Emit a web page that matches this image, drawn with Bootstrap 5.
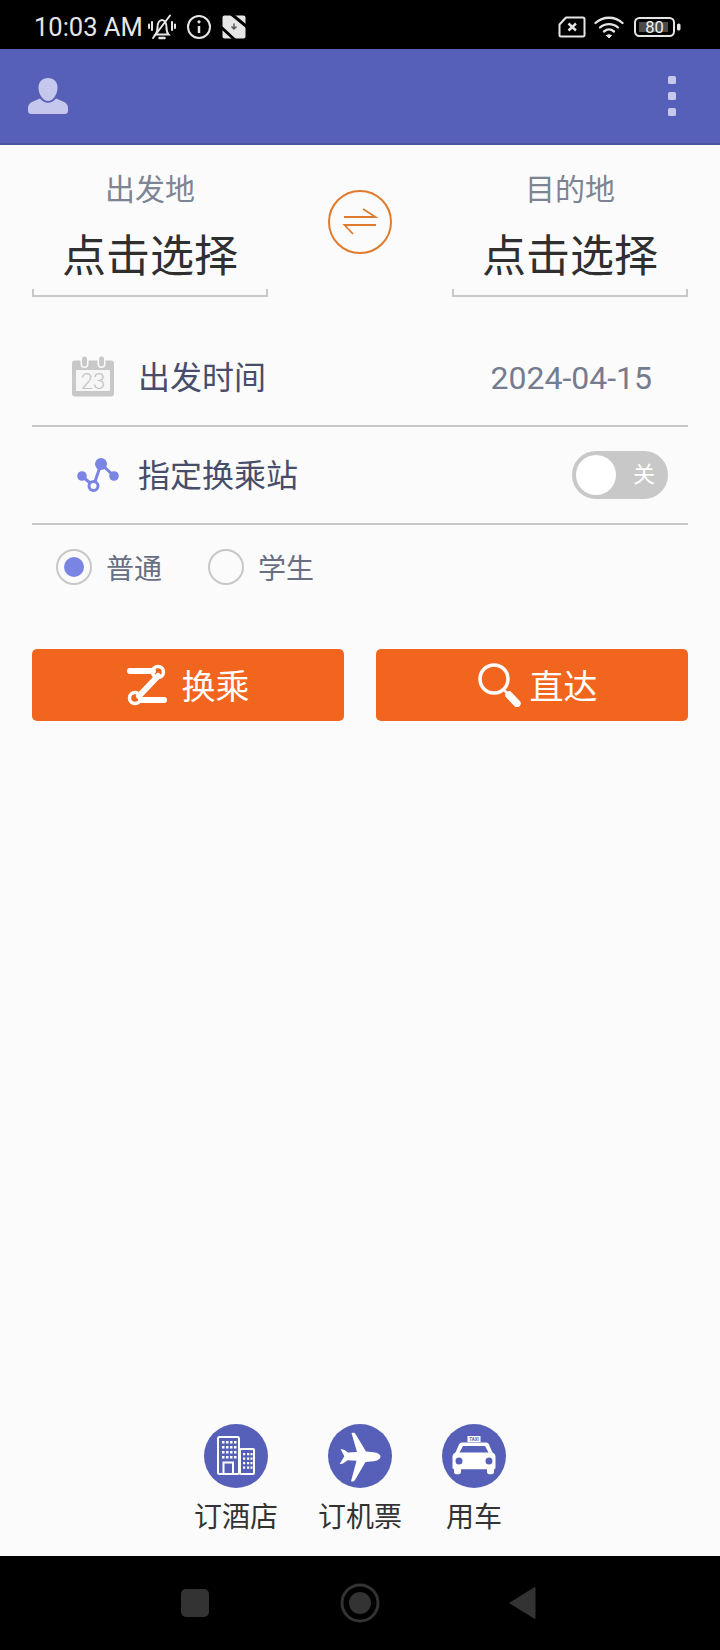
<!DOCTYPE html>
<html lang="zh">
<head>
<meta charset="utf-8">
<title>换乘</title>
<link href="https://cdn.jsdelivr.net/npm/bootstrap@5.3.0/dist/css/bootstrap.min.css" rel="stylesheet">
<style>
html,body{height:1650px;overflow:hidden;margin:0}
body{font-family:"Roboto","Noto Sans CJK SC",sans-serif;background:#fbfbfb}
svg{display:block;flex:none}
.phone{height:1650px}
.sbar{height:49px;background:#000;color:#e6e6e6;padding:5px 39px 0 34px}
.sbar-time{font-size:25.5px;line-height:30px;width:114px;white-space:nowrap}
.sb-info{margin-left:10px}
.sb-dl{margin-left:10px}
.sb-batt{margin-left:10px}
.abar{height:96px;background:#5760b8;border-bottom:2px solid #4c549f;padding:0 44px 0 28px}
.dots{gap:8px}
.dots i{display:block;width:8px;height:8px;border-radius:1.5px;background:#c5c8ec}
.route{padding:26px 32px 0 32px}
.place{width:236px;text-align:center}
.place-l{font-size:30px;line-height:38px;color:#7d8494}
.place-v{font-size:44px;line-height:60px;margin-top:18px;color:#2f2f2f}
.brk{height:8px;margin-top:2px;border:2px solid #c8c8c8;border-top:0}
.swap{width:64px;height:64px;margin-top:19px}
.frow{margin:0 32px;height:98px;border-bottom:2px solid #c8c8c8;padding-left:40px;font-size:32px;color:#474d6b}
.frow-a{margin-top:32px;padding-right:36px;padding-top:2px}
.frow-b{padding-right:20px;padding-top:2px}
.frow-date{color:#767c8f;font-size:32px}
.tgl{width:96px;height:48px;border-radius:24px;background:#c8c8c8;padding:4px;color:#fff;font-size:22px;line-height:40px;margin-bottom:2px}
.tgl-k{width:40px;height:40px;border-radius:50%;background:#fff}
.tgl-t{margin-left:17px}
.radios{margin-top:24px;padding-left:56px;height:36px;font-size:28px;color:#696e81}
.rd{width:36px;height:36px;border-radius:50%;border:2.5px solid #c8c8c8;margin-right:14px}
.rd-on::after{content:"";width:20px;height:20px;border-radius:50%;background:#7a84e2}
.rd-lab{padding-top:5px}
.rd-txt{margin-right:46px}
.acts{margin:64px 32px 0 32px;gap:32px}
.go{flex:1 1 0;height:72px;background:#f2651f;border:0;border-radius:5px;color:#fff;font-size:34px;line-height:1;padding:0}
.go:hover,.go:active{background:#f2651f;color:#fff}
.go span{padding-top:3px}
.go-a{gap:15px}
.go-b{gap:9px}
.go-b svg{margin-left:10px}
.foot{padding:0 0 20px 194px;gap:40px}
.fi{width:84px}
.fi-c{width:64px}
.fi-o{width:64px;height:64px}
.fi-t{font-size:28px;line-height:36px;margin-top:12px;color:#333;white-space:nowrap}
.nbar{height:94px;background:#000}
.nb-a{width:28px;height:28px;border-radius:5px;background:#333}
.nb-w{padding:0 184px 0 181px;height:94px}
.nb-t{margin-left:-2px}
</style>
</head>
<body>
<div class="phone d-flex flex-column">
  <div class="sbar d-flex align-items-center">
    <span class="sbar-time">10:03 AM</span>
    <svg width="28" height="26" viewBox="0 0 28 26" fill="none" stroke="#e6e6e6" stroke-width="2" stroke-linecap="round">
      <path d="M7.500 20.500h13c-1.500-1.500-2-3.500-2-7 0-4.500-2-7.500-4.500-7.500s-4.500 3-4.500 7.500c0 3.500-.5 5.500-2 7z"/>
      <path d="M11.500 24h5" stroke-width="2.500"/>
      <path d="M22 1.500 5 24" stroke-width="2"/>
      <path d="M4 8v8M1 10.500v3.500M24 8v8M27 10.500v3.500"/>
    </svg>
    <svg class="sb-info" width="26" height="26" viewBox="0 0 26 26" fill="none" stroke="#e6e6e6" stroke-width="2">
      <circle cx="13" cy="13" r="11"/><path d="M13 12v7" stroke-width="2.500"/><circle cx="13" cy="7.800" r="1.600" fill="#e6e6e6" stroke="none"/>
    </svg>
    <svg class="sb-dl" width="24" height="24" viewBox="0 0 24 24">
      <rect x="0.500" y="0.500" width="23" height="23" rx="2" fill="#e6e6e6"/>
      <path d="M8 0 24 13v-4L13 0zM0 11 14 24h-4L0 15z" fill="#000"/>
      <path d="M12 8.500v5M9.500 11.500 12 14l2.500-2.500" fill="none" stroke="#555" stroke-width="1.400"/>
    </svg>
    <div class="ms-auto d-flex align-items-center">
      <svg width="28" height="22" viewBox="0 0 28 22" fill="none" stroke="#e6e6e6" stroke-width="2">
        <path d="M8 1.500h17a1.500 1.500 0 0 1 1.500 1.500v16a1.500 1.500 0 0 1-1.500 1.500H3A1.500 1.500 0 0 1 1.500 19V8.500z" stroke-linejoin="round"/>
        <path d="M10.500 7.500l7.500 7M18 7.500l-7.500 7" stroke-width="2.400"/>
      </svg>
      <svg class="ms-2" width="30" height="24" viewBox="0 0 30 24" fill="none" stroke="#e6e6e6" stroke-width="2.300" stroke-linecap="round">
        <path d="M1.500 8C9 1 21 1 28.500 8"/><path d="M6 12.500c5-4.500 13-4.500 18 0"/><path d="M10 16.500c3-2.500 7-2.500 10 0"/>
        <path d="M12.500 20.500 15 23l2.500-2.500C16 19.500 14 19.500 12.500 20.500z" fill="#e6e6e6" stroke-width="1"/>
      </svg>
      <svg class="sb-batt" width="47" height="20" viewBox="0 0 47 20">
        <rect x="1" y="1" width="39" height="18" rx="4.500" fill="none" stroke="#e6e6e6" stroke-width="2"/>
        <rect x="5" y="5" width="29" height="10" fill="#4a4a4a"/>
        <rect x="43" y="6.500" width="3.500" height="7" rx="1.500" fill="#e6e6e6"/>
        <text x="20.500" y="16" text-anchor="middle" font-family="Roboto" font-size="16.500" fill="#f0f0f0">80</text>
      </svg>
    </div>
  </div>

  <div class="abar d-flex align-items-center justify-content-between">
    <svg width="40" height="36" viewBox="0 0 40 36" fill="#c5c8ec">
      <path d="M20 0c5.800 0 9.500 4 9.500 9.500 0 6-4 13.500-9.500 13.500S10.500 15.500 10.500 9.500C10.500 4 14.200 0 20 0z"/>
      <path d="M12 20.500c2 2.500 4.800 4.200 8 4.200s6-1.700 8-4.200l7 3c3 1.200 5 3 5 6.500v2.500a3.500 3.500 0 0 1-3.500 3.500h-33A3.500 3.500 0 0 1 0 32.500V30c0-3.500 2-5.300 5-6.500z"/>
    </svg>
    <div class="dots d-flex flex-column"><i></i><i></i><i></i></div>
  </div>

  <main class="flex-grow-1 d-flex flex-column">
    <div class="route d-flex justify-content-between align-items-start">
      <div class="place">
        <div class="place-l">出发地</div>
        <div class="place-v">点击选择</div>
        <div class="brk"></div>
      </div>
      <svg class="swap" viewBox="0 0 64 64" fill="none" stroke="#e07b2d">
        <circle cx="32" cy="32" r="31" stroke-width="2"/>
        <path d="M16 27h31.500L35 19M48 35H16.500L25 44" stroke-width="1.800"/>
      </svg>
      <div class="place">
        <div class="place-l">目的地</div>
        <div class="place-v">点击选择</div>
        <div class="brk"></div>
      </div>
    </div>

    <div class="frow frow-a d-flex align-items-center">
      <svg width="66" height="44" viewBox="0 0 66 44">
        <rect y="4.500" width="42" height="36" rx="3" fill="#c8c8c8"/>
        <rect x="4" y="14" width="34" height="21" fill="#f6f6f6"/>
        <rect x="8.500" y="0" width="8" height="12" rx="4" fill="#fbfbfb"/>
        <rect x="25.500" y="0" width="8" height="12" rx="4" fill="#fbfbfb"/>
        <rect x="10" y="0.500" width="5" height="10" rx="2.500" fill="#c8c8c8"/>
        <rect x="27" y="0.500" width="5" height="10" rx="2.500" fill="#c8c8c8"/>
        <text x="21" y="32.500" text-anchor="middle" font-family="Roboto" font-weight="300" font-size="22" fill="#c4c4c4">23</text>
      </svg>
      <span>出发时间</span>
      <span class="frow-date ms-auto">2024-04-15</span>
    </div>

    <div class="frow frow-b d-flex align-items-center">
      <svg width="66" height="44" viewBox="0 0 66 44">
        <path d="M10 22 21.500 32 29 10 42 22" fill="none" stroke="#7a84e2" stroke-width="3"/>
        <circle cx="29" cy="10" r="6" fill="#7a84e2"/>
        <circle cx="42" cy="22" r="4.800" fill="#7a84e2"/>
        <circle cx="10" cy="22" r="4.800" fill="#7a84e2"/>
        <circle cx="21.500" cy="32" r="4.500" fill="#fbfbfb" stroke="#7a84e2" stroke-width="3"/>
      </svg>
      <span>指定换乘站</span>
      <div class="tgl d-flex ms-auto">
        <span class="tgl-k"></span>
        <span class="tgl-t">关</span>
      </div>
    </div>

    <div class="radios d-flex align-items-center">
      <span class="rd rd-on d-flex align-items-center justify-content-center"></span>
      <span class="rd-lab rd-txt">普通</span>
      <span class="rd"></span>
      <span class="rd-lab">学生</span>
    </div>

    <div class="acts d-flex">
      <button type="button" class="btn go go-a d-flex align-items-center justify-content-center">
        <svg width="40" height="42" viewBox="0 0 40 42" fill="none" stroke="#fff" stroke-linecap="round">
          <path d="M3 7h23M31 12 12 32M14 36h23" stroke-width="6"/>
          <circle cx="31" cy="8" r="5.500" stroke-width="3.500"/>
          <circle cx="8" cy="34" r="5.500" stroke-width="3.500"/>
        </svg>
        <span>换乘</span>
      </button>
      <button type="button" class="btn go go-b d-flex align-items-center justify-content-center">
        <svg width="44" height="44" viewBox="0 0 44 44" fill="none" stroke="#fff" stroke-linecap="round">
          <circle cx="17" cy="16" r="14" stroke-width="3.500"/>
          <path d="M27 27 29 29" stroke-width="2.500"/>
          <path d="M32 32 40 40.500" stroke-width="7.500"/>
        </svg>
        <span>直达</span>
      </button>
    </div>

    <div class="foot d-flex mt-auto">
      <div class="fi d-flex flex-column align-items-center">
        <svg class="fi-o" viewBox="0 0 64 64">
          <circle cx="32" cy="32" r="32" fill="#5760b8"/>
          <g fill="none" stroke="#fff" stroke-width="2">
            <rect x="14" y="13" width="21" height="37" rx="1.500"/>
            <rect x="36" y="25" width="14" height="25" rx="1"/>
            <path d="M19.500 50V38.500h9.500V50"/>
          </g>
          <g fill="#fff">
            <path d="M18 17h2.500v2.500H18zM22 17h2.500v2.500H22zM26 17h2.500v2.500H26zM30 17h2.500v2.500H30zM18 22h2.500v2.500H18zM22 22h2.500v2.500H22zM26 22h2.500v2.500H26zM30 22h2.500v2.500H30zM18 27h2.500v2.500H18zM22 27h2.500v2.500H22zM26 27h2.500v2.500H26zM30 27h2.500v2.500H30zM18 32h2.500v2.500H18zM22 32h2.500v2.500H22zM26 32h2.500v2.500H26zM30 32h2.500v2.500H30z"/>
            <path d="M39 29h2.200v2.200H39zM43 29h2.200v2.200H43zM46.500 29h2v2.200h-2zM39 33.500h2.200v2.200H39zM43 33.500h2.200v2.200H43zM46.500 33.500h2v2.200h-2zM39 38h2.200v2.200H39zM43 38h2.200v2.200H43zM46.500 38h2v2.200h-2zM39 42.500h2.200v2.200H39zM43 42.500h2.200v2.200H43zM46.500 42.500h2v2.200h-2z"/>
          </g>
        </svg>
        <div class="fi-t">订酒店</div>
      </div>
      <div class="fi d-flex flex-column align-items-center">
        <svg class="fi-o" viewBox="0 0 64 64">
          <circle cx="32" cy="32" r="32" fill="#5760b8"/>
          <path fill="#fff" d="M52.500 32.500c0-2-3-3.700-7-4.200L38 27.500 27.500 10c-.6-1-1.500-1.300-2.500-1.200l-1.500.3 5.500 19-9 .3-3.500-2.300c-1-.6-2.200-1-4-1.200l3.800 7.400-4.600 7.800c1.800-.2 3-.6 4-1.200l3.800-2.700 9 .5-5.500 20.500 1.500.2c1 .1 1.800-.3 2.500-1.300L37.500 38l8-.7c4-.5 7-2.500 7-4.800z"/>
        </svg>
        <div class="fi-t">订机票</div>
      </div>
      <div class="fi fi-c d-flex flex-column align-items-center">
        <svg class="fi-o" viewBox="0 0 64 64">
          <circle cx="32" cy="32" r="32" fill="#5760b8"/>
          <rect x="25.500" y="12" width="13" height="6" fill="#fff"/>
          <text x="32" y="16.800" text-anchor="middle" font-family="Roboto" font-weight="700" font-size="4.500" fill="#5760b8">TAXI</text>
          <path fill="#fff" fill-rule="evenodd" d="M20 18.500h24c1.500 0 2.500.8 3 2l3.500 8c2 .8 3 2.500 3 4.500v10.500c0 1-.5 1.700-1.500 1.800V48c0 1.300-1 2.200-2.200 2.200h-2.600c-1.200 0-2.200-.9-2.200-2.200v-2.800H19V48c0 1.300-1 2.200-2.200 2.200h-2.600c-1.200 0-2.200-.9-2.200-2.200v-2.700c-1-.1-1.500-.8-1.500-1.800V33c0-2 1-3.700 3-4.500l3.500-8c.5-1.200 1.500-2 3-2zM21 22l-3.500 6.500h29L43 22zM17 33.500a3.500 3.500 0 1 0 0 7 3.500 3.500 0 0 0 0-7zM47 33.500a3.500 3.500 0 1 0 0 7 3.500 3.500 0 0 0 0-7z"/>
        </svg>
        <div class="fi-t">用车</div>
      </div>
    </div>
  </main>

  <div class="nbar">
    <div class="nb-w d-flex align-items-center justify-content-between">
      <span class="nb-a"></span>
      <svg width="40" height="40" viewBox="0 0 40 40"><circle cx="20" cy="20" r="18" fill="none" stroke="#333" stroke-width="3"/><circle cx="20" cy="20" r="11" fill="#333"/></svg>
      <svg class="nb-t" width="28" height="34" viewBox="0 0 28 34"><path d="M1 17 26 1.500c.8-.5 1.500 0 1.500.8v29.400c0 .8-.7 1.300-1.500.8z" fill="#333"/></svg>
    </div>
  </div>
</div>
<script src="https://cdn.jsdelivr.net/npm/bootstrap@5.3.0/dist/js/bootstrap.bundle.min.js"></script>
</body>
</html>
